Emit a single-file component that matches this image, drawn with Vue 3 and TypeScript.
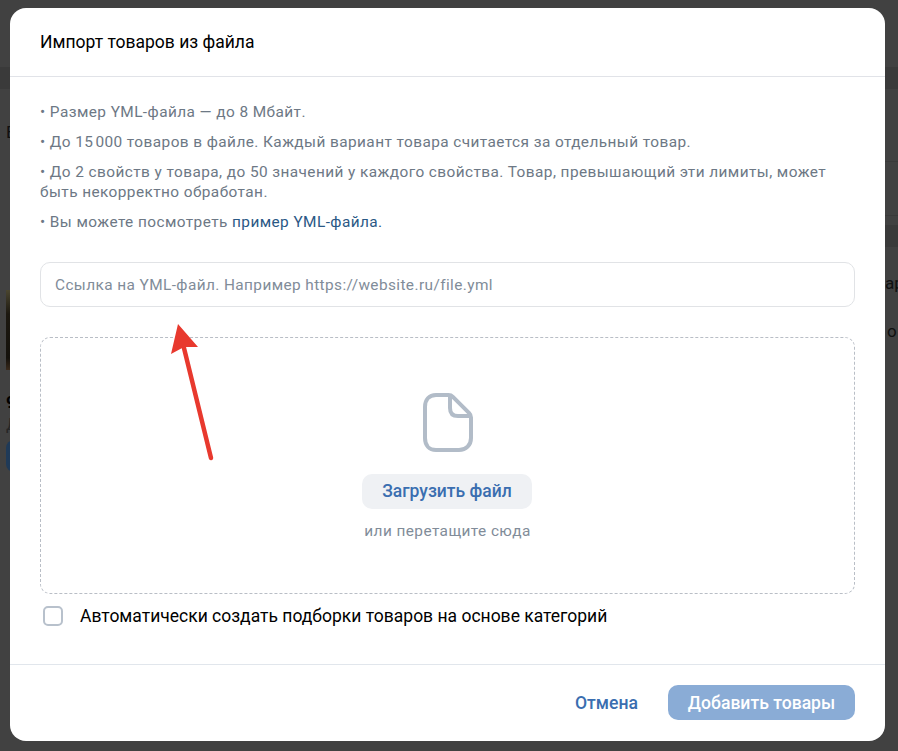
<script setup lang="ts">
const rules: string[] = [
  'Размер YML-файла — до 8 Мбайт.',
  'До 15\u200a000 товаров в файле. Каждый вариант товара считается за отдельный товар.',
  'До 2 свойств у товара, до 50 значений у каждого свойства. Товар, превышающий эти лимиты, может быть некорректно обработан.',
]
</script>

<template>
  <div class="page">
    <div class="behind">
      <div class="band band1"></div>
      <div class="band band2"></div>
      <div class="band line1"></div>
      <div class="band line2"></div>
      <span class="ghost ghostE">Е</span>
      <span class="ghost ghostAr">ар</span>
      <span class="ghost ghostO">о</span>
      <div class="ghostImg"></div>
      <span class="ghost ghostS">9</span>
      <span class="ghost ghostD">Д</span>
      <div class="ghostBtn"></div>
    </div>

    <div class="modal">
      <div class="head">Импорт товаров из файла</div>
      <div class="body">
        <div class="rules">
          <p v-for="rule in rules" :key="rule">• {{ rule }}</p>
          <p>• Вы можете посмотреть <a class="link">пример YML-файла.</a></p>
        </div>
        <input class="url" type="text" placeholder="Ссылка на YML-файл. Например https://website.ru/file.yml" />
        <div class="drop">
          <svg class="fileIcon" width="50" height="60" viewBox="0 0 50 60" fill="none">
            <path d="M13 2h12.500c1.700 0 3.200.6 4.400 1.800l16.300 16.300c1.200 1.200 1.800 2.700 1.800 4.400V45c0 7-5 12-12 12H13C6 57 2 52 2 45V14C2 7 6 2 13 2Z" stroke="#b2bcc8" stroke-width="4" />
            <path d="M27 2.500V15c0 5 2.500 8 8 8h12.500" stroke="#b2bcc8" stroke-width="4" />
          </svg>
          <button class="upload" type="button">Загрузить файл</button>
          <div class="hint">или перетащите сюда</div>
        </div>
        <label class="check">
          <span class="box"></span>
          <span>Автоматически создать подборки товаров на основе категорий</span>
        </label>
      </div>
      <div class="foot">
        <button class="cancel" type="button">Отмена</button>
        <button class="submit" type="button">Добавить товары</button>
      </div>
    </div>

    <svg class="arrow" width="60" height="150" viewBox="0 0 60 150" fill="none">
      <path d="M41 136 13 22" stroke="#e8392e" stroke-width="4.500" stroke-linecap="round" />
      <path d="M8 2 1 32 14 25 28 25Z" fill="#e8392e" />
    </svg>
  </div>
</template>

<style>
html, body {
  margin: 0;
  background: #414141;
}
</style>

<style scoped>
.page {
  position: relative;
  width: 898px;
  height: 751px;
  overflow: hidden;
  background: #414141;
  font-family: Roboto, "Noto Sans", sans-serif;
  padding: 8px 13px 10px 10px;
  box-sizing: border-box;
}

.behind {
  position: absolute;
  inset: 0;
  color: #101010;
}

.band {
  position: absolute;
  background: #3a3a3a;
}
.band1 { left: 0; right: 0; top: 67px; height: 22px; }
.band2 { left: 885px; right: 0; top: 225px; height: 22px; }
.line1 { left: 885px; right: 0; top: 161px; height: 1px; }
.line2 { left: 885px; right: 0; top: 215px; height: 1px; }

.ghost {
  position: absolute;
  font-size: 17px;
  line-height: 20px;
}
.ghostE { left: 6px; top: 122px; }
.ghostAr { left: 885px; top: 273px; }
.ghostO { left: 887px; top: 321px; }
.ghostS { left: 6px; top: 392px; font-weight: 700; color: #000; }
.ghostD { left: 6px; top: 414px; color: #262626; }

.ghostImg {
  position: absolute;
  left: 6px;
  top: 290px;
  width: 10px;
  height: 80px;
  background: linear-gradient(#4b4630, #1c1810 30%, #14110c 85%, #3a2a1c);
}

.ghostBtn {
  position: absolute;
  left: 6px;
  top: 440px;
  width: 10px;
  height: 32px;
  border-radius: 8px 0 0 8px;
  background: #1f3a58;
}

.modal {
  position: relative;
  display: flex;
  flex-direction: column;
  height: 733px;
  background: #fff;
  border-radius: 16px;
}

.head {
  padding: 0 30px;
  height: 68px;
  line-height: 68px;
  font-size: 17.5px;
  color: #000;
  border-bottom: 1px solid #e1e3e8;
  flex: none;
}

.body {
  flex: 1;
  padding: 25px 30px 0;
}

.rules {
  font-size: 15.4px;
  line-height: 20px;
  letter-spacing: 0.42px;
  color: #6d7885;
}
.rules p {
  margin: 0 0 10px;
}

.link {
  color: #2a5885;
}

.url {
  display: block;
  box-sizing: border-box;
  width: 100%;
  height: 45px;
  margin-top: 30px;
  padding: 0 14px;
  border: 1px solid #e1e3e6;
  border-radius: 10px;
  outline: none;
  font: inherit;
  font-size: 15.4px;
  letter-spacing: 0.4px;
}
.url::placeholder {
  color: #818c99;
  opacity: 1;
}

.drop {
  box-sizing: border-box;
  height: 257px;
  margin-top: 30px;
  border: 1px dashed #b9bec6;
  border-radius: 10px;
  display: flex;
  flex-direction: column;
  align-items: center;
  padding-top: 55px;
}

.fileIcon {
  display: block;
  flex: none;
  margin-left: 1px;
}

.upload {
  margin-top: 21px;
  margin-right: 2px;
  width: 170px;
  height: 35px;
  border: 0;
  border-radius: 10px;
  padding: 0 0 2px 1px;
  background: #eff1f4;
  color: #3a6eb0;
  font: inherit;
  font-size: 17.5px;
  font-weight: 500;
}

.hint {
  margin-top: 12px;
  font-size: 15.4px;
  line-height: 20px;
  letter-spacing: 0.42px;
  color: #818c99;
}

.check {
  display: flex;
  align-items: center;
  gap: 17px;
  margin-top: 11px;
  padding-left: 3px;
  font-size: 17.5px;
  line-height: 22px;
  color: #000;
}

.box {
  box-sizing: border-box;
  width: 20px;
  height: 20px;
  border: 2px solid #b8c1cc;
  border-radius: 5px;
}

.foot {
  flex: none;
  display: flex;
  justify-content: flex-end;
  align-items: center;
  gap: 30px;
  height: 77px;
  padding: 0 30px 1px 0;
  box-sizing: border-box;
  border-top: 1px solid #e1e6ec;
}

.cancel,
.submit {
  height: 35px;
  border: 0;
  background: none;
  font: inherit;
  font-size: 17.6px;
  font-weight: 500;
  padding: 0;
}
.cancel {
  color: #3a6eb0;
}
.submit {
  width: 187px;
  border-radius: 10px;
  background: #8aacd6;
  color: #fff;
}

.arrow {
  position: absolute;
  left: 170px;
  top: 322px;
}
</style>
